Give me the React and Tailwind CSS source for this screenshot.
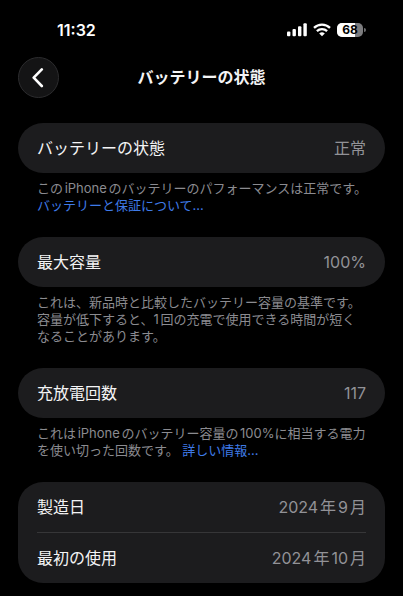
import React from "react";

function SignalIcon() {
  return (
    <svg width="20" height="14" viewBox="0 0 20 14" fill="#fff" aria-hidden="true">
      <rect x="0" y="8.5" width="3.4" height="4.7" rx="1" />
      <rect x="5.5" y="6" width="3.4" height="7.2" rx="1" />
      <rect x="11" y="3.2" width="3.4" height="10" rx="1" />
      <rect x="16.4" y="0.2" width="3.4" height="13" rx="1" />
    </svg>
  );
}

function WifiIcon() {
  return (
    <svg width="18" height="14" viewBox="0 0 18 14" fill="none" stroke="#fff" strokeWidth="2.3" aria-hidden="true">
      <path d="M1 4.9a11.6 11.6 0 0 1 16 0" />
      <path d="M3.9 8.1a7.4 7.4 0 0 1 10.2 0" />
      <path d="M6.2 10.5a4.1 4.1 0 0 1 5.6 0L9 13.2z" fill="#fff" stroke="none" />
    </svg>
  );
}

function Battery({ level }) {
  return (
    <div className="flex items-center gap-px">
      <div className="relative flex h-[14px] w-[26px] items-center justify-center overflow-hidden rounded-[5px] bg-[#7c7c7e]">
        <div className="absolute inset-y-0 left-0 bg-white" style={{ width: `${level}%` }} />
        <span className="relative text-xs leading-[14px] font-bold text-black">{level}</span>
      </div>
      <div className="h-1 w-0.5 rounded-r-full bg-[#6c6c6e]" />
    </div>
  );
}

function Row({ label, value }) {
  return (
    <div className="flex h-[50px] items-center justify-between">
      <dt className="text-[#f4f4f5]">{label}</dt>
      <dd className="text-[#929297]">{value}</dd>
    </div>
  );
}

function Card({ children }) {
  return <dl className="rounded-[25px] bg-[#1c1c1e] px-[19px] text-base">{children}</dl>;
}

function Note({ children }) {
  return <p className="mt-[7px] pr-4 pl-[19px] text-[13px] leading-[17px] text-[#8b8b90]">{children}</p>;
}

function Link({ children }) {
  return (
    <a href="#" className="inline-block text-[#3f7be8]">
      {children}
    </a>
  );
}

export default function App() {
  return (
    <div
      lang="ja"
      className="min-h-screen bg-black pb-3 font-['Inter','Noto_Sans_CJK_JP',sans-serif] [text-autospace:normal]"
    >
      <div className="flex h-[57px] items-center justify-between pt-0.5 pr-[37px] pl-[57px] text-white">
        <span className="text-base font-semibold">11:32</span>
        <div className="flex items-center gap-1.5">
          <SignalIcon />
          <WifiIcon />
          <Battery level={68} />
        </div>
      </div>

      <header className="grid grid-cols-[41px_1fr_41px] items-center px-[18px]">
        <button
          type="button"
          aria-label="戻る"
          className="flex size-[41px] items-center justify-center rounded-full border border-[#2c2c2e] bg-[#141415]"
        >
          <svg width="14" height="20" viewBox="0 0 14 20" fill="none" stroke="#fff" strokeWidth="2.6" strokeLinecap="round" strokeLinejoin="round" aria-hidden="true">
            <path d="M9.8 1.4 1.7 9.7l8.1 8.3" />
          </svg>
        </button>
        <h1 className="pb-0.5 text-center text-base font-semibold text-[#f4f4f5]">バッテリーの状態</h1>
      </header>

      <main className="mt-[25px] flex flex-col gap-[23px] px-[18px]">
        <section>
          <Card>
            <Row label="バッテリーの状態" value="正常" />
          </Card>
          <Note>
            このiPhoneのバッテリーのパフォーマンスは正常です。
            <Link>バッテリーと保証について...</Link>
          </Note>
        </section>

        <section>
          <Card>
            <Row label="最大容量" value="100%" />
          </Card>
          <Note>
            これは、新品時と比較したバッテリー容量の基準です。容量が低下すると、1回の充電で使用できる時間が短く
            <span className="inline-block">なることがあります。</span>
          </Note>
        </section>

        <section>
          <Card>
            <Row label="充放電回数" value="117" />
          </Card>
          <Note>
            これはiPhoneのバッテリー容量の100%に相当する電力を使い切った回数です。 <Link>詳しい情報...</Link>
          </Note>
        </section>

        <Card>
          <Row label="製造日" value="2024年9月" />
          <div className="h-px bg-[#363638]" />
          <Row label="最初の使用" value="2024年10月" />
        </Card>
      </main>
    </div>
  );
}
